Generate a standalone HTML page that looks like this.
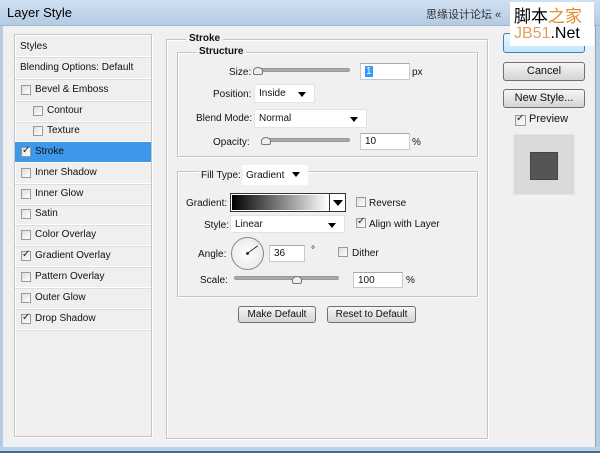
<!DOCTYPE html>
<html><head><meta charset="utf-8"><style>
*{box-sizing:border-box;margin:0;padding:0}
body{width:600px;height:453px;overflow:hidden;background:#f0f0f0;font-family:"Liberation Sans",sans-serif;font-size:10px;color:#111;position:relative}
.a{position:absolute}
.t{position:absolute;white-space:nowrap}
.box{position:absolute;border:1px solid #c4c4c4;box-shadow:1px 1px 0 #fff inset,1px 1px 0 #fff}
.inp{position:absolute;background:#fff;border:1px solid #c9c9c9;border-top-color:#a9a9a9;padding:2px 0 0 4px}
.dd{position:absolute;background:#fff;border:1px solid #e3e3e3;padding:3px 0 0 4px}
.dd:after{content:"";position:absolute;right:8px;top:7px;border-left:4px solid transparent;border-right:4px solid transparent;border-top:5px solid #000}
.btn{position:absolute;border:1px solid #707070;border-radius:3px;background:linear-gradient(#f6f6f6,#e4e4e4 50%,#d5d5d5);text-align:center;font-size:11px;padding-top:2px}
.cb{position:absolute;width:10px;height:10px;border:1px solid #9a9a9a;background:linear-gradient(135deg,#ddd,#fff)}
.ck:after{content:"✓";position:absolute;left:0;top:-3px;font-size:10px;color:#223;font-weight:bold;font-family:"DejaVu Sans",sans-serif}
.row{position:absolute;left:15px;width:136px;height:21px;border-bottom:1px solid #fff;box-shadow:0 1px 0 #ddd}
.row .t{top:4px}
.sl{position:absolute;height:4px;background:#aaa;border:1px solid #999;border-radius:2px}
.th{position:absolute;width:10px;height:8px;border:1px solid #777;border-radius:50% 50% 2px 2px;background:#eee}
</style></head><body>
<div class="a" style="left:0;top:0;width:600px;height:26px;background:linear-gradient(#d0e0f2,#b4cbe4);border-bottom:1px solid #9fb5cc"></div>
<div class="t" style="left:7px;top:5px;font-size:13px;color:#000">Layer Style</div>
<div class="t" style="left:426px;top:6px;font-size:11px;color:#333;font-family:'Liberation Sans','Noto Sans CJK SC',sans-serif">思缘设计论坛 «</div>
<div class="a" style="left:0;top:26px;width:3px;height:427px;background:#b5cbe2"></div>
<div class="a" style="left:595px;top:26px;width:5px;height:427px;background:#b5cbe2;border-left:1px solid #8aa"></div>
<div class="a" style="left:0;top:447px;width:600px;height:6px;background:#b8d4ec;border-bottom:2px solid #4a6a88"></div>

<div class="box" style="left:14px;top:34px;width:138px;height:403px;background:#efefef"></div>
<div class="row" style="top:35px;height:22px"><span class="t" style="left:5px;top:6px">Styles</span></div>
<div class="row" style="top:58px"><span class="t" style="left:5px">Blending Options: Default</span></div>
<div class="row" style="top:80px"><span class="cb" style="left:6px;top:5px"></span><span class="t" style="left:20px">Bevel &amp; Emboss</span></div>
<div class="row" style="top:101px"><span class="cb" style="left:18px;top:5px"></span><span class="t" style="left:32px">Contour</span></div>
<div class="row" style="top:121px"><span class="cb" style="left:18px;top:5px"></span><span class="t" style="left:32px">Texture</span></div>
<div class="row" style="top:142px;background:#3d97ea;box-shadow:none"><span class="cb ck" style="left:6px;top:5px"></span><span class="t" style="left:20px">Stroke</span></div>
<div class="row" style="top:163px"><span class="cb" style="left:6px;top:5px"></span><span class="t" style="left:20px">Inner Shadow</span></div>
<div class="row" style="top:184px"><span class="cb" style="left:6px;top:5px"></span><span class="t" style="left:20px">Inner Glow</span></div>
<div class="row" style="top:204px"><span class="cb" style="left:6px;top:5px"></span><span class="t" style="left:20px">Satin</span></div>
<div class="row" style="top:225px"><span class="cb" style="left:6px;top:5px"></span><span class="t" style="left:20px">Color Overlay</span></div>
<div class="row" style="top:246px"><span class="cb ck" style="left:6px;top:5px"></span><span class="t" style="left:20px">Gradient Overlay</span></div>
<div class="row" style="top:267px"><span class="cb" style="left:6px;top:5px"></span><span class="t" style="left:20px">Pattern Overlay</span></div>
<div class="row" style="top:288px"><span class="cb" style="left:6px;top:5px"></span><span class="t" style="left:20px">Outer Glow</span></div>
<div class="row" style="top:309px"><span class="cb ck" style="left:6px;top:5px"></span><span class="t" style="left:20px">Drop Shadow</span></div>

<div class="box" style="left:166px;top:39px;width:322px;height:400px"></div>
<div class="t" style="left:186px;top:33px;background:#f0f0f0;padding:0 3px;font-weight:bold">Stroke</div>
<div class="box" style="left:177px;top:52px;width:301px;height:105px"></div>
<div class="t" style="left:196px;top:46px;background:#f0f0f0;padding:0 3px;font-weight:bold">Structure</div>
<div class="t" style="left:229px;top:67px">Size:</div>
<div class="sl" style="left:256px;top:68px;width:94px"></div><div class="th" style="left:253px;top:67px"></div>
<div class="inp" style="left:360px;top:63px;width:50px;height:17px"><span style="background:#3399ff;color:#fff;padding:0 1px">1</span></div>
<div class="t" style="left:412px;top:67px">px</div>
<div class="t" style="left:213px;top:89px">Position:</div>
<div class="dd" style="left:254px;top:84px;width:61px;height:19px">Inside</div>
<div class="t" style="left:196px;top:113px">Blend Mode:</div>
<div class="dd" style="left:254px;top:109px;width:113px;height:19px">Normal</div>
<div class="t" style="left:213px;top:137px">Opacity:</div>
<div class="sl" style="left:262px;top:138px;width:88px"></div><div class="th" style="left:261px;top:137px"></div>
<div class="inp" style="left:360px;top:133px;width:50px;height:17px">10</div>
<div class="t" style="left:412px;top:137px">%</div>

<div class="box" style="left:177px;top:171px;width:301px;height:126px"></div>
<div class="dd" style="left:242px;top:165px;width:66px;height:20px;background:#fff;border:none;padding-left:4px;padding-top:5px">Gradient</div>
<div class="t" style="left:199px;top:170px;background:#f0f0f0;padding:0 2px">Fill Type:</div>
<div class="t" style="left:186px;top:198px">Gradient:</div>
<div class="a" style="left:230px;top:193px;width:116px;height:19px;border:1px solid #333;background:#fff"><div class="a" style="left:1px;top:1px;width:96px;height:15px;background:linear-gradient(90deg,#000,#fff)"></div><div class="a" style="left:98px;top:0;width:1px;height:17px;background:#333"></div><div class="a" style="left:102px;top:6px;border-left:5px solid transparent;border-right:5px solid transparent;border-top:6px solid #000"></div></div>
<div class="cb" style="left:356px;top:197px"></div><div class="t" style="left:369px;top:198px">Reverse</div>
<div class="t" style="left:204px;top:220px">Style:</div>
<div class="dd" style="left:230px;top:215px;width:115px;height:18px">Linear</div>
<div class="cb ck" style="left:356px;top:218px"></div><div class="t" style="left:369px;top:219px">Align with Layer</div>
<div class="t" style="left:198px;top:249px">Angle:</div>
<div class="a" style="left:231px;top:237px;width:33px;height:33px;border:1px solid #888;border-radius:50%;background:radial-gradient(#fff,#e4e4e4)"><div class="a" style="left:15px;top:15px;width:13px;height:1px;background:#333;transform-origin:0 0;transform:rotate(-36deg)"></div><div class="a" style="left:14px;top:14px;width:3px;height:3px;background:#333;border-radius:50%"></div></div>
<div class="inp" style="left:269px;top:245px;width:36px;height:17px">36</div>
<div class="t" style="left:311px;top:245px">°</div>
<div class="cb" style="left:338px;top:247px"></div><div class="t" style="left:352px;top:248px">Dither</div>
<div class="t" style="left:200px;top:275px">Scale:</div>
<div class="sl" style="left:234px;top:276px;width:105px"></div><div class="th" style="left:292px;top:276px"></div>
<div class="inp" style="left:353px;top:272px;width:50px;height:16px">100</div>
<div class="t" style="left:406px;top:275px">%</div>

<div class="btn" style="left:238px;top:306px;width:78px;height:17px;font-size:10px">Make Default</div>
<div class="btn" style="left:327px;top:306px;width:89px;height:17px;font-size:10px">Reset to Default</div>

<div class="btn" style="left:503px;top:33px;width:82px;height:20px;border-color:#3c7fb1;background:linear-gradient(#eaf6fd,#bee6fd)">OK</div>
<div class="btn" style="left:503px;top:62px;width:82px;height:19px">Cancel</div>
<div class="btn" style="left:503px;top:89px;width:82px;height:19px">New Style...</div>
<div class="cb ck" style="left:515px;top:115px;width:11px;height:11px"></div><div class="t" style="left:529px;top:113px;font-size:11px">Preview</div>
<div class="a" style="left:513px;top:134px;width:62px;height:61px;background:#d9d9d9;border:1px solid #e6e6e6"><div class="a" style="left:16px;top:17px;width:28px;height:28px;background:#555;border:1px solid #444"></div></div>

<div class="a" style="left:510px;top:2px;width:84px;height:44px;background:#fff;z-index:5"></div>
<div class="t" style="left:514px;top:2px;font-size:17px;font-family:'Liberation Sans','Noto Sans CJK SC',sans-serif;color:#000;z-index:6">脚本<span style="color:#e08a2a">之家</span></div>
<div class="t" style="left:514px;top:25px;font-size:16px;color:#000;z-index:6"><span style="color:#e0a060">JB51</span>.Net</div>
</body></html>
